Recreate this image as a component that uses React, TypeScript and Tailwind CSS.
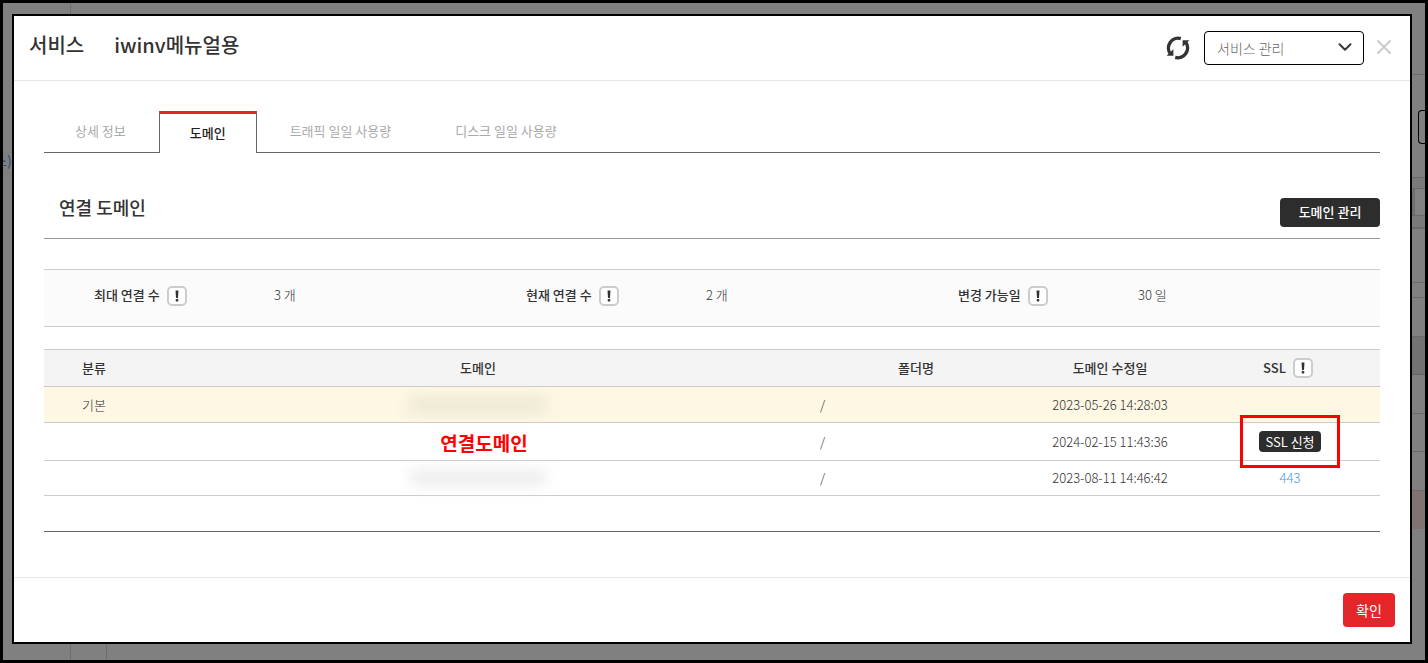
import type { ReactNode } from "react";

type Row = {
  kind: string;
  domain: ReactNode;
  folder: string;
  modified: string;
  ssl: ReactNode;
  rowClass: string;
};

const tabs = ["상세 정보", "도메인", "트래픽 일일 사용량", "디스크 일일 사용량"];

const limits = [
  { label: "최대 연결 수", value: "3 개" },
  { label: "현재 연결 수", value: "2 개" },
  { label: "변경 가능일", value: "30 일" },
];

function RefreshIcon() {
  return (
    <svg viewBox="0 0 24 24" className="size-6" fill="none" aria-hidden="true">
      <path d="M14.8 2.6A9.8 9.8 0 0 0 4.6 18.2" stroke="#333" strokeWidth="3.4" />
      <path d="M9.2 21.4A9.8 9.8 0 0 0 19.4 5.8" stroke="#333" strokeWidth="3.4" />
      <path d="M0.6 19.8H7.4V13.2Z" fill="#333" />
      <path d="M23.4 4.2H16.6V10.8Z" fill="#333" />
    </svg>
  );
}

function HelpButton({ label }: { label: string }) {
  return (
    <button
      type="button"
      aria-label={label}
      className="flex size-5 shrink-0 items-center justify-center rounded-[5px] border-2 border-[#ccc] bg-white"
    >
      <svg viewBox="0 0 4 12" className="h-3 w-1" aria-hidden="true">
        <path d="M0.5 0.5H3.5L3 8H1Z" fill="#333" />
        <rect x="0.7" y="9" width="2.6" height="2.6" rx="0.8" fill="#333" />
      </svg>
    </button>
  );
}

function MaskedDomain({ tone }: { tone: string }) {
  return <div className={`mx-auto h-4 w-[136px] blur-[7px] ${tone}`} />;
}

const rows: Row[] = [
  {
    kind: "기본",
    domain: <MaskedDomain tone="bg-[#ebe8d4]" />,
    folder: "/",
    modified: "2023-05-26 14:28:03",
    ssl: null,
    rowClass: "h-9 bg-[#fdf7e3]",
  },
  {
    kind: "",
    domain: <div className="pt-0.5 pl-3 text-[19px] leading-6 font-bold text-[#f00]">연결도메인</div>,
    folder: "/",
    modified: "2024-02-15 11:43:36",
    ssl: (
      <div className="relative inline-flex">
        <button type="button" className="h-[21px] rounded-[4px] bg-[#2d2d2d] px-1.5 leading-5 font-normal text-white">
          SSL 신청
        </button>
        <span className="pointer-events-none absolute -inset-x-[19px] -inset-y-4 border-3 border-[#f00]" />
      </div>
    ),
    rowClass: "h-[38px]",
  },
  {
    kind: "",
    domain: <MaskedDomain tone="bg-[#ededed]" />,
    folder: "/",
    modified: "2023-08-11 14:46:42",
    ssl: (
      <a href="#ssl" className="text-[#4a9bf0]">
        443
      </a>
    ),
    rowClass: "h-[35px]",
  },
];

function Backdrop() {
  return (
    <div className="absolute inset-0 flex justify-between" aria-hidden="true">
      <div className="flex">
        <div className="flex w-[68px] justify-start overflow-hidden border-r border-[#6e6e6e] pt-[147px] text-sm font-normal text-[#2b4d73]">
          <span className="-ml-[9px]">스)</span>
        </div>
        <div className="mt-10 w-9 border-r border-[#6e6e6e]" />
      </div>
      <div className="w-4">
        <div className="h-[72px] border-b border-[#6a6a6a]" />
        <div className="h-[103px] border-b border-[#6a6a6a] pt-[35px] pl-[9px]">
          <div className="h-[34px] rounded-l-[4px] border border-r-0 border-black" />
        </div>
        <div className="h-[11px] border-b border-[#6a6a6a] bg-[#7a7a7a]" />
        <div className="h-[27px] border-b border-[#6a6a6a] bg-[#6e6e6e] pl-1.5">
          <div className="h-full bg-[#828282]" />
        </div>
        <div className="h-[13px] border-b-2 border-[#6a6a6a] bg-[#7a7a7a]" />
        <div className="h-[54px] border-b border-[#6a6a6a]" />
        <div className="h-[15px] border-b border-[#6a6a6a]" />
        <div className="h-[39px] border-b border-[#6a6a6a]" />
        <div className="h-[38px] border-b border-[#626262] bg-[#727272]" />
        <div className="h-[39px] border-b border-[#6a6a6a]" />
        <div className="h-[38px] border-b border-[#6a6a6a]" />
        <div className="h-[39px] border-b border-[#6a6a6a]" />
        <div className="h-[38px] bg-[#807372]" />
      </div>
    </div>
  );
}

export default function App() {
  return (
    <div className="relative flex min-h-screen flex-col border-3 border-black bg-[#808080] pt-[11px] pr-[13px] pb-4 pl-[9px] font-['Noto_Sans_CJK_KR','Noto_Sans',sans-serif] text-[13px] leading-5 font-light text-[#333]">
      <Backdrop />
      <section
        role="dialog"
        aria-label="서비스 iwinv메뉴얼용"
        className="relative flex grow flex-col border-2 border-black bg-white"
      >
        <header className="flex h-[65px] items-center justify-between border-b border-[#e5e5e5] pr-[18px] pl-[15px]">
          <h1 className="flex gap-[30px] pb-1.5 text-xl leading-7 font-medium">
            <span>서비스</span>
            <span>iwinv메뉴얼용</span>
          </h1>
          <div className="flex items-center">
            <button type="button" aria-label="새로고침" className="mr-3.5">
              <RefreshIcon />
            </button>
            <div className="relative">
              <select
                aria-label="서비스 관리"
                className="h-[34px] w-40 appearance-none rounded-[4px] border border-black bg-white pr-8 pl-3 text-sm font-light text-[#666]"
              >
                <option>서비스 관리</option>
              </select>
              <svg
                viewBox="0 0 14 9"
                className="pointer-events-none absolute top-3 right-3 h-[9px] w-3.5"
                fill="none"
                aria-hidden="true"
              >
                <path d="M1.5 1.2L7 6.8L12.5 1.2" stroke="#343a40" strokeWidth="2" strokeLinecap="round" strokeLinejoin="round" />
              </svg>
            </div>
            <button type="button" aria-label="닫기" className="ml-3 pb-0.5">
              <svg viewBox="0 0 16 16" className="size-4" fill="none" aria-hidden="true">
                <path d="M2 2L14 14M14 2L2 14" stroke="#ccc" strokeWidth="2" strokeLinecap="round" />
              </svg>
            </button>
          </div>
        </header>

        <div className="flex grow flex-col px-[30px] pt-[30px]">
          <div role="tablist" className="flex h-[42px] gap-0.5 border-b border-[#666]">
            {tabs.map((tab) =>
              tab === "도메인" ? (
                <button
                  key={tab}
                  type="button"
                  role="tab"
                  aria-selected="true"
                  className="-mb-px border-x border-t-3 border-x-[#666] border-t-[#e4252a] bg-white px-[30px] pb-0.5 font-medium text-[#222]"
                >
                  {tab}
                </button>
              ) : (
                <button
                  key={tab}
                  type="button"
                  role="tab"
                  aria-selected="false"
                  className="px-[31px] pb-0.5 font-normal text-[#aaa]"
                >
                  {tab}
                </button>
              ),
            )}
          </div>

          <div className="flex items-end justify-between border-b border-[#999] pt-[42px] pb-[11px] pl-[15px]">
            <h2 className="pb-2 text-lg leading-6 font-medium">연결 도메인</h2>
            <button type="button" className="h-[29px] w-[100px] rounded-[4px] bg-[#2d2d2d] pb-0.5 font-medium text-white">
              도메인 관리
            </button>
          </div>

          <dl className="mt-[30px] grid h-[58px] grid-cols-3 border-y border-[#ccc] bg-[#fbfbfb] px-5 pt-[15px]">
            {limits.map(({ label, value }) => (
              <div key={label} className="flex items-start pl-[30px]">
                <dt className="flex w-[180px] items-end gap-[7px] font-medium">
                  <span className="pb-px">{label}</span>
                  <HelpButton label={`${label} 도움말`} />
                </dt>
                <dd>{value}</dd>
              </div>
            ))}
          </dl>

          <table className="mt-[22px] w-full table-fixed border-separate border-spacing-0 text-center [&_td]:border-b [&_td]:border-[#ccc] [&_td]:p-0 [&_th]:border-y [&_th]:border-[#ccc] [&_th]:p-0 [&_th]:font-medium">
            <colgroup>
              <col className="w-[100px]" />
              <col />
              <col className="w-[208px]" />
              <col className="w-[180px]" />
              <col className="w-[180px]" />
            </colgroup>
            <thead>
              <tr className="h-[38px] bg-[#f4f4f4]">
                <th scope="col">분류</th>
                <th scope="col">도메인</th>
                <th scope="col">폴더명</th>
                <th scope="col">도메인 수정일</th>
                <th scope="col">
                  <div className="flex justify-center gap-[7px] pr-1">
                    SSL
                    <HelpButton label="SSL 도움말" />
                  </div>
                </th>
              </tr>
            </thead>
            <tbody>
              {rows.map((row) => (
                <tr key={row.modified} className={row.rowClass}>
                  <td>{row.kind}</td>
                  <td>{row.domain}</td>
                  <td>
                    <div className="pl-2 text-left">{row.folder}</div>
                  </td>
                  <td>{row.modified}</td>
                  <td>{row.ssl}</td>
                </tr>
              ))}
            </tbody>
          </table>
          <div className="h-9 border-b border-[#666]" />
        </div>

        <footer className="flex h-[65px] items-center justify-end border-t border-[#e5e5e5] pr-[15px]">
          <button type="button" className="h-[34px] w-[52px] rounded-[4px] bg-[#e4252a] text-sm font-normal text-white">
            확인
          </button>
        </footer>
      </section>
    </div>
  );
}
